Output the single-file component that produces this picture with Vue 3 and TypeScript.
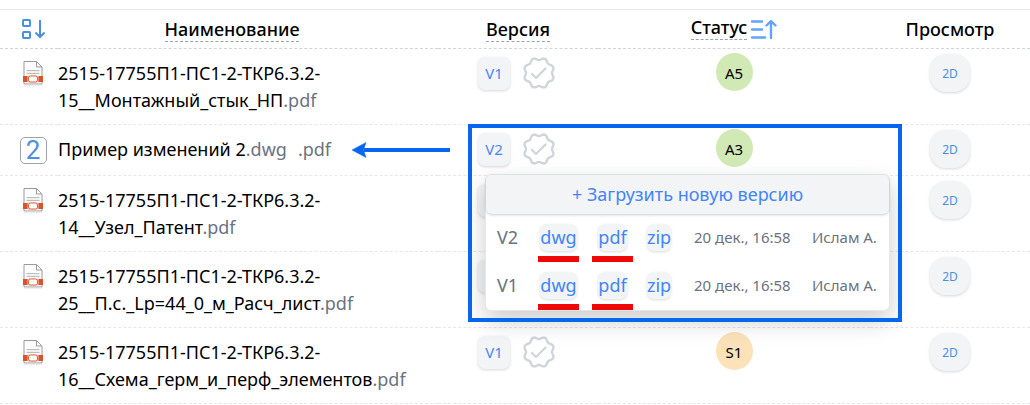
<script setup lang="ts">
interface FileRow {
  id: number
  head: string
  tail: string
  extensions: string[]
  version: string
  status: string
  tone: 'green' | 'orange'
  changes?: number
  open?: boolean
}

interface Upload {
  version: string
  formats: { name: string; marked: boolean }[]
  date: string
  author: string
}

const rows: FileRow[] = [
  { id: 1, head: '2515-17755П1-ПС1-2-ТКР6.3.2-', tail: '15__Монтажный_стык_НП', extensions: ['.pdf'], version: 'V1', status: 'A5', tone: 'green' },
  { id: 2, head: 'Пример изменений 2', tail: '', extensions: ['.dwg', '.pdf'], version: 'V2', status: 'A3', tone: 'green', changes: 2, open: true },
  { id: 3, head: '2515-17755П1-ПС1-2-ТКР6.3.2-', tail: '14__Узел_Патент', extensions: ['.pdf'], version: '', status: '', tone: 'green' },
  { id: 4, head: '2515-17755П1-ПС1-2-ТКР6.3.2-', tail: '25__П.с._Lp=44_0_м_Расч_лист', extensions: ['.pdf'], version: '', status: '', tone: 'green' },
  { id: 5, head: '2515-17755П1-ПС1-2-ТКР6.3.2-', tail: '16__Схема_герм_и_перф_элементов', extensions: ['.pdf'], version: 'V1', status: 'S1', tone: 'orange' },
]

const formats = [
  { name: 'dwg', marked: true },
  { name: 'pdf', marked: true },
  { name: 'zip', marked: false },
]

const uploads: Upload[] = [
  { version: 'V2', formats, date: '20 дек., 16:58', author: 'Ислам А.' },
  { version: 'V1', formats, date: '20 дек., 16:58', author: 'Ислам А.' },
]

// Outline of the approval seal: a circle with eight soft lobes.
const sealPath = (() => {
  const points: string[] = []
  for (let i = 0; i < 96; i++) {
    const a = (i / 96) * Math.PI * 2
    const r = 14.2 - 1.2 * Math.cos(8 * a)
    points.push(`${(17 + r * Math.cos(a)).toFixed(2)} ${(17 + r * Math.sin(a)).toFixed(2)}`)
  }
  return `M${points.join('L')}Z`
})()
</script>

<template>
  <main class="page">
    <table class="files">
      <thead>
        <tr>
          <th class="col-icon">
            <button class="plain" type="button" aria-label="Порядок">
              <svg width="24" height="24" viewBox="0 0 24 24" fill="none" stroke="#4a90e2" stroke-width="2">
                <rect x="2" y="3" width="7" height="6" rx="0.8" />
                <rect x="2" y="15" width="7" height="6" rx="0.8" />
                <path d="M19 3v17M14.500 15.500l4.500 4.500 4.500-4.500" />
              </svg>
            </button>
          </th>
          <th class="col-name"><button class="plain sort" type="button">Наименование</button></th>
          <th class="col-version"><button class="plain sort" type="button">Версия</button></th>
          <th class="col-status">
            <div class="status-head">
              <button class="plain sort" type="button">Статус</button>
              <button class="plain" type="button" aria-label="По возрастанию">
                <svg width="27" height="22" viewBox="0 0 27 22" fill="none" stroke="#60a5fa" stroke-width="2.4" stroke-linecap="round" stroke-linejoin="round">
                  <path d="M2 3.500h10M2 11.500h10M2 19.500h13M21 20V3.500M16.500 7.500L21 3l4.500 4.500" />
                </svg>
              </button>
            </div>
          </th>
          <th class="col-view">Просмотр</th>
        </tr>
      </thead>
      <tbody>
        <tr v-for="row in rows" :key="row.id">
          <td class="col-icon">
            <span v-if="row.changes" class="changes">{{ row.changes }}</span>
            <svg v-else class="file" width="22" height="26" viewBox="0 0 22 26" fill="none">
              <path d="M2 1.500h12.500l5.500 5.500v17H2z" fill="#fcfcfc" stroke="#9b9b9b" />
              <path d="M14.500 1.500V7H20" stroke="#9b9b9b" />
              <path d="M2 25h18" stroke="#dedede" />
              <path d="M4.500 10.500h13M4.500 13.500h13" stroke="#bdbdbd" />
              <path d="M4.500 12h13" stroke="#e2e2e2" />
              <rect x="1" y="16" width="20" height="6" fill="#d9532c" />
              <rect x="5.500" y="15.500" width="11" height="7" fill="#f6c9bb" />
              <rect x="6.500" y="16" width="9" height="6" rx="2" fill="#fff" stroke="#dd6542" />
            </svg>
          </td>
          <td class="col-name">
            <div class="name">
              <span>{{ row.head }}<wbr />{{ row.tail }}<span v-for="ext in row.extensions" :key="ext" class="ext">{{ ext }}</span></span>
              <svg v-if="row.open" class="arrow" width="98" height="16" viewBox="0 0 98 16">
                <path d="M12 8h86" stroke="#0866ee" stroke-width="4" />
                <path d="M0 8L14 0.500L11.500 8L14 15.500z" fill="#0866ee" stroke="#0866ee" stroke-width="0.5" />
              </svg>
            </div>
          </td>
          <td class="col-version">
            <div class="version">
              <button class="chip" type="button">{{ row.version }}</button>
              <svg v-if="row.version" class="seal" width="34" height="34" viewBox="0 0 34 34" fill="none" stroke="#d1d5db" stroke-width="2.4" stroke-linecap="round" stroke-linejoin="round">
                <path :d="sealPath" />
                <path d="M10 18l4 4 9.500-9.500" stroke-width="2.200" />
              </svg>
            </div>
            <template v-if="row.open">
              <section class="popup">
                <button class="upload" type="button">+ Загрузить новую версию</button>
                <ul class="history">
                  <li v-for="item in uploads" :key="item.version">
                    <span>{{ item.version }}</span>
                    <span v-for="format in item.formats" :key="format.name" class="format" :class="{ marked: format.marked }">
                      <a href="#">{{ format.name }}</a>
                    </span>
                    <span class="small">{{ item.date }}</span>
                    <span class="small">{{ item.author }}</span>
                  </li>
                </ul>
              </section>
              <div class="frame"></div>
            </template>
          </td>
          <td class="col-status">
            <span v-if="row.status" class="status" :class="row.tone">{{ row.status }}</span>
          </td>
          <td class="col-view"><button class="view" type="button">2D</button></td>
        </tr>
      </tbody>
    </table>
  </main>
</template>

<style>
body {
  margin: 0;
  background: #fff;
}
</style>

<style scoped>
.page {
  padding-top: 9px;
  overflow: hidden;
  color: #000;
  font: 18px/27px "Noto Sans", "Open Sans", sans-serif;
}
.files {
  width: 100%;
  table-layout: fixed;
  border-spacing: 0;
  border-top: 1px solid #e5e7eb;
}
th,
td {
  box-sizing: border-box;
  padding: 0;
  text-align: center;
  vertical-align: top;
}
th {
  height: 39px;
  padding-top: 7px;
  border-bottom: 1px dashed #d1d5db;
  font-weight: 500;
  line-height: 24px;
}
td {
  border-bottom: 1px dashed #e5e7eb;
}
button {
  padding: 0;
  border: 0;
  background: none;
  color: inherit;
  font: inherit;
  cursor: pointer;
}
svg {
  display: block;
}
.plain {
  display: inline-block;
  vertical-align: top;
}
.sort {
  border-bottom: 1px dashed #9ca3af;
}
.col-icon {
  width: 58px;
  padding-left: 8px;
}
.col-name {
  padding-right: 32px;
}
.col-version {
  position: relative;
  width: 160px;
}
.col-status {
  width: 272px;
}
.col-view {
  width: 160px;
}
th.col-status {
  padding-top: 5px;
}
.status-head {
  display: flex;
  justify-content: center;
  gap: 3px;
}
.status-head svg {
  margin-top: 3px;
}
.file {
  margin: 11px auto 0;
}
.changes {
  display: block;
  box-sizing: border-box;
  width: 27px;
  height: 27px;
  margin: 12px auto 0;
  border: 1px solid #9ca3af;
  border-radius: 5px;
  color: #4a90e2;
  font: 400 26px/25px Roboto, sans-serif;
}
td.col-name {
  padding-top: 11px;
  padding-bottom: 10px;
  text-align: left;
}
.name {
  display: flex;
  align-items: center;
  justify-content: space-between;
  margin-right: -44px;
}
.arrow {
  flex: none;
}
.ext {
  color: #6b7280;
}
.ext + .ext {
  margin-left: 11px;
}
.version {
  display: flex;
  gap: 12px;
  padding: 8px 0 0 40px;
}
.chip {
  width: 32px;
  height: 33px;
  border-radius: 7px;
  background: #f3f4f6;
  box-shadow: 0 1px 3px rgba(0, 0, 0, 0.16);
  color: #4a86f7;
  font-size: 15px;
}
.seal {
  margin-top: -1px;
}
.status {
  display: block;
  width: 37px;
  height: 38px;
  margin: 4px auto 8px;
  border-radius: 50%;
  font-size: 15px;
  line-height: 40px;
}
.green {
  background: #d0e9b5;
}
.orange {
  background: #fbe2b9;
}
.view {
  width: 40px;
  height: 38px;
  margin-top: 5px;
  border-radius: 16px;
  background: #f3f4f6;
  box-shadow: 0 1px 3px rgba(0, 0, 0, 0.16);
  color: #4a90e2;
  font-size: 12px;
  vertical-align: top;
}
.popup {
  position: absolute;
  z-index: 2;
  top: 49px;
  left: 47px;
  box-sizing: border-box;
  width: 405px;
  border: 1px solid #e5e7eb;
  border-radius: 6px;
  background: #fff;
  box-shadow: 0 10px 24px rgba(0, 0, 0, 0.2);
}
.upload {
  display: block;
  width: 100%;
  height: 39px;
  border-radius: 6px;
  background: #f3f4f6;
  box-shadow: 0 1px 3px rgba(0, 0, 0, 0.2);
  color: #4285f4;
  font-size: 18px;
}
.history {
  margin: 0;
  padding: 0 0 0 11px;
  list-style: none;
}
.history li {
  display: grid;
  grid-template-columns: 41px 54px 54px 48px 118px auto;
  height: 38px;
  padding-top: 10px;
  color: #6b7280;
  text-align: left;
  white-space: nowrap;
}
.small {
  font-size: 15px;
}
.format {
  justify-self: start;
}
.format a {
  display: block;
  margin: 0 1px 5px;
  border-radius: 7px;
  background: #f3f4f6;
  box-shadow: 0 1px 3px rgba(0, 0, 0, 0.14);
  color: #4285f4;
  font-size: 18px;
  text-decoration: none;
}
.marked {
  width: 41px;
  text-align: center;
}
.marked a {
  width: fit-content;
  margin: 0 auto 5px;
}
.marked::after {
  content: "";
  display: block;
  height: 6px;
  background: #ee0808;
}
.frame {
  position: absolute;
  z-index: 3;
  top: -1px;
  left: 30px;
  box-sizing: border-box;
  width: 434px;
  height: 198px;
  border: 4px solid #0866ee;
  pointer-events: none;
}
</style>
